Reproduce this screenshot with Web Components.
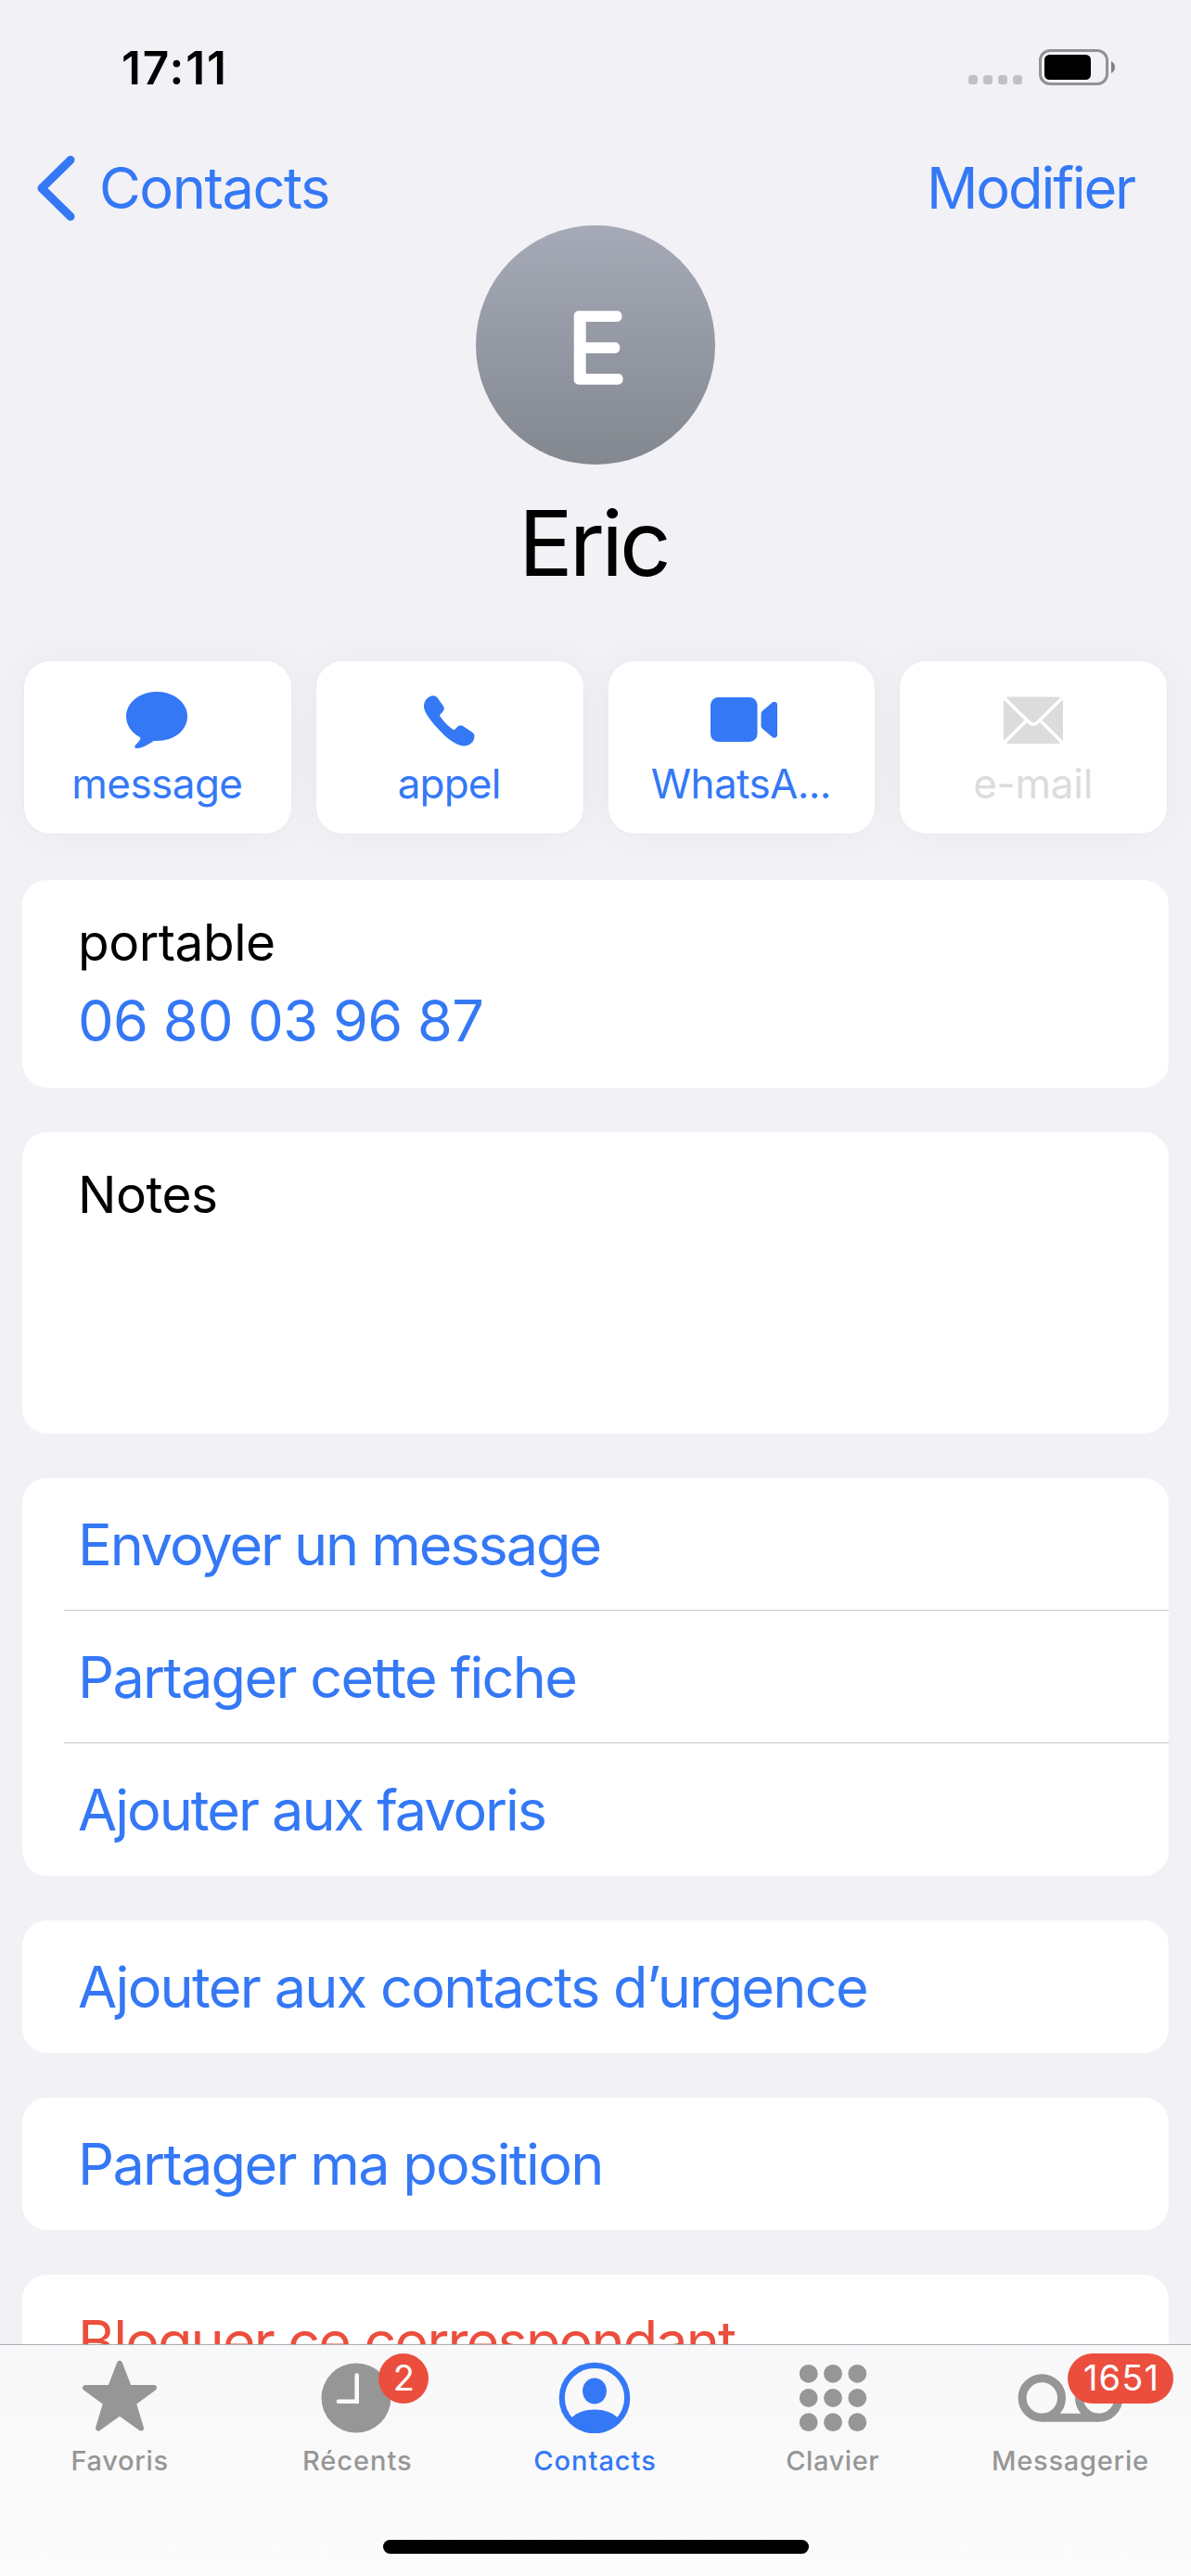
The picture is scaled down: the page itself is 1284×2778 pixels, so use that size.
<!DOCTYPE html>
<html lang="fr">
<head>
<meta charset="utf-8">
<title>Eric</title>
<style>
  html, body { margin: 0; padding: 0; }
  body {
    width: 1284px;
    height: 2778px;
    overflow: hidden;
    font-family: Inter, "Liberation Sans", sans-serif;
    --blue: #3478f6;
    --red: #eb4e3d;
    --grey: #969696;
    --page: #f2f1f6;
  }
</style>
</head>
<body>

<contact-screen>
  <status-bar slot="top" time="17:11"></status-bar>
  <nav-bar slot="top" back="Contacts" action="Modifier"></nav-bar>

  <contact-header initial="E">Eric</contact-header>

  <action-row>
    <action-tile label="message" style="letter-spacing:-.56px">
      <svg width="66" height="61" viewBox="0 0 66 61">
        <path d="M33 0C51.5 0 66 11.5 66 26.500C66 41.500 52 53 33 53C31.500 53 30.300 53 29.200 53.200C24 57 17 60.600 12 61C9.500 61.200 8.600 59.400 9.800 57.700C12 55.500 14.500 52.700 15.300 51C15.700 50 15.200 49.400 14.300 48.800C5.500 43.500 0 36 0 26.500C0 11.500 14.500 0 33 0Z"/>
      </svg>
    </action-tile>
    <action-tile label="appel" style="letter-spacing:-.81px">
      <svg width="55" height="61" viewBox="0 -4 55 61">
        <path d="M10 .2C12 0 13.500 1 14.800 2.800L21 11.500C22.300 13.800 21.800 15.800 20.200 17.800L17.800 20.200C17 21 17 21.800 17.600 22.800C21 28 26 33 31 36.600C32 37.300 32.800 37.200 33.600 36.400L36.500 33.500C38.300 31.800 40.500 31.800 42.500 33.200L51.500 39.300C53.800 41 54.500 42 54.500 44C54.500 50 49.500 54.400 43.500 54.400C37 54.400 29 49.500 21.500 42.500L12 32.500C4.500 23.500 0 17 0 11.500C0 5 5 .4 10 .2Z"/>
      </svg>
    </action-tile>
    <action-tile label="WhatsA..." style="letter-spacing:-.62px">
      <svg width="78" height="61" viewBox="-6 -6 78 61">
        <rect width="50.500" height="48" rx="8.500"/>
        <path d="M54.500 18C54.500 16.500 55 15.600 56.200 14.600L66.500 5.600C69 3.800 72 5 72 8V40.500C72 43.500 69 44.600 66.500 42.800L56.200 34C55 33 54.500 32.100 54.500 30.600Z"/>
      </svg>
    </action-tile>
    <action-tile label="e-mail" disabled style="letter-spacing:-.26px">
      <svg width="64" height="61" viewBox="0 -5.500 64 61">
        <rect width="64" height="50.500" rx="5"/>
        <g fill="none" stroke="#fff" stroke-width="3.600">
          <path d="M.5 1L27.500 27.500Q32 31.500 36.500 27.500L63.500 1"/>
          <path d="M.5 49.500L24 26M63.500 49.500L40 26"/>
        </g>
      </svg>
    </action-tile>
  </action-row>

  <card-group>
    <phone-field label="portable">06 80 03 96 87</phone-field>
  </card-group>

  <card-group>
    <notes-field>Notes</notes-field>
  </card-group>

  <card-group>
    <link-row style="letter-spacing:-2.1px">Envoyer un message</link-row>
    <link-row style="letter-spacing:-1.7px">Partager cette fiche</link-row>
    <link-row style="letter-spacing:-2.02px">Ajouter aux favoris</link-row>
  </card-group>

  <card-group>
    <link-row style="letter-spacing:-1.7px">Ajouter aux contacts d’urgence</link-row>
  </card-group>

  <card-group>
    <link-row style="letter-spacing:-1.7px">Partager ma position</link-row>
  </card-group>

  <card-group>
    <link-row danger style="letter-spacing:-1.86px">Bloquer ce correspondant</link-row>
  </card-group>

  <tab-bar slot="bottom">
    <tab-item label="Favoris" style="letter-spacing:.67px">
      <svg width="84" height="80" viewBox="0 0 84 80">
        <path stroke="currentColor" stroke-width="6" stroke-linejoin="round" d="M42 4.800L52.100 31H79L56.800 47.300L65 74.500L42 58L19 74.500L27.200 47.300L5 31H31.900Z"/>
      </svg>
    </tab-item>
    <tab-item label="Récents" badge="2" style="letter-spacing:.96px">
      <svg width="78" height="80" viewBox="0 0 78 80">
        <circle cx="38" cy="42" r="37.500"/>
        <path fill="none" stroke="#fafafa" stroke-width="4.600" stroke-linecap="round" d="M38.700 17.600V45.800H19"/>
        <path fill="#fafafa" d="M37 44H41V48.100H37Z"/>
      </svg>
    </tab-item>
    <tab-item label="Contacts" active style="letter-spacing:.99px">
      <svg width="78" height="80" viewBox="0 0 78 80">
        <circle cx="39" cy="42" r="35.200" fill="none" stroke="currentColor" stroke-width="6.200"/>
        <ellipse cx="39" cy="34.500" rx="12.900" ry="14"/>
        <path d="M14 63.500C20 57.500 29 54.500 39 54.500C49 54.500 58 57.500 64 63.500C59 73 49 79 39 79C29 79 19 73 14 63.500Z"/>
      </svg>
    </tab-item>
    <tab-item label="Clavier" style="letter-spacing:.57px">
      <svg width="76" height="80" viewBox="0 0 76 80">
        <circle cx="11.700" cy="15.800" r="9.900"/><circle cx="38" cy="15.800" r="9.900"/><circle cx="64.300" cy="15.800" r="9.900"/>
        <circle cx="11.700" cy="42" r="9.900"/><circle cx="38" cy="42" r="9.900"/><circle cx="64.300" cy="42" r="9.900"/>
        <circle cx="11.700" cy="68.200" r="9.900"/><circle cx="38" cy="68.200" r="9.900"/><circle cx="64.300" cy="68.200" r="9.900"/>
      </svg>
    </tab-item>
    <tab-item label="Messagerie" badge="1651" style="letter-spacing:.77px">
      <svg width="114" height="80" viewBox="0 0 114 80">
        <g fill="none" stroke="currentColor" stroke-width="9">
          <circle cx="26.300" cy="42" r="21.200"/>
          <circle cx="87.700" cy="42" r="21.200"/>
          <path d="M26.300 63.200H87.700"/>
        </g>
      </svg>
    </tab-item>
  </tab-bar>
</contact-screen>

<script>
// small helper, every element here has an open shadow root
function render(el, html) {
  const template = document.createElement("template")
  template.innerHTML = html
  el.attachShadow({ mode: "open" }).appendChild(template.content.cloneNode(true))
}

class ContactScreen extends HTMLElement {
  constructor() {
    super()
    render(this, `
      <style>
        :host { display: flex; flex-direction: column; height: 2778px; background: var(--page); }
        main { flex: 1; min-height: 0; overflow: hidden; display: flex; flex-direction: column; gap: 48px; }
        ::slotted(card-group) { margin: 0 24px; flex: none; }
      </style>
      <slot name="top"></slot>
      <main><slot></slot></main>
      <slot name="bottom"></slot>
    `)
  }
}

class StatusBar extends HTMLElement {
  constructor() {
    super()
    render(this, `
      <style>
        :host { display: flex; justify-content: space-between; align-items: center; height: 146px; padding: 0 82px 0 131px; box-sizing: border-box; flex: none; }
        span { font-size: 49.5px; font-weight: 600; letter-spacing: 1.9px; line-height: 60px; }
        svg { display: block; }
      </style>
      <span>${this.getAttribute("time")}</span>
      <svg width="160" height="60" viewBox="0 0 160 60">
        <g fill="#c1c0c5">
          <rect x="2" y="38" width="10" height="10" rx="3.500"/>
          <rect x="18" y="38" width="10" height="10" rx="3.500"/>
          <rect x="34" y="38" width="10" height="10" rx="3.500"/>
          <rect x="50" y="38" width="10" height="10" rx="3.500"/>
        </g>
        <rect x="79.500" y="11.500" width="72" height="36" rx="10.500" fill="none" stroke="#929296" stroke-width="3"/>
        <rect x="84" y="16" width="50" height="27" rx="5.500"/>
        <path fill="#828286" d="M156 23C161.300 25.500 161.300 33.500 156 36Z"/>
      </svg>
    `)
  }
}

class NavBar extends HTMLElement {
  constructor() {
    super()
    render(this, `
      <style>
        :host { display: flex; justify-content: space-between; align-items: center; height: 97px; padding: 17px 61px 0 38px; box-sizing: border-box; flex: none; color: var(--blue); font-size: 61.4px; line-height: 80px; }
        .back { display: flex; align-items: center; gap: 24px; }
        .back span { letter-spacing: -1.48px; }
        .edit { letter-spacing: -2.16px; }
        svg { display: block; }
      </style>
      <div class="back">
        <svg width="45" height="72" viewBox="0 0 45 72">
          <path fill="none" stroke="currentColor" stroke-width="9" stroke-linecap="round" stroke-linejoin="round" d="M38 5.500L7 36L38 66.500"/>
        </svg>
        <span>${this.getAttribute("back")}</span>
      </div>
      <div class="edit">${this.getAttribute("action")}</div>
    `)
  }
}

class ContactHeader extends HTMLElement {
  constructor() {
    super()
    render(this, `
      <style>
        :host { display: flex; flex-direction: column; align-items: center; height: 422px; flex: none; }
        .name { font-size: 97.7px; line-height: 120px; letter-spacing: -3.9px; margin-top: 25px; padding-right: 5px; }
        svg { display: block; }
      </style>
      <svg width="258" height="258" viewBox="0 0 258 258">
        <defs>
          <linearGradient id="disc" x1="0" y1="0" x2="0" y2="1">
            <stop offset="0" stop-color="#a6aab7"/>
            <stop offset="1" stop-color="#83878f"/>
          </linearGradient>
        </defs>
        <circle cx="129" cy="129" r="129" fill="url(#disc)"/>
        <text x="99" y="167" textLength="62" lengthAdjust="spacingAndGlyphs" font-family="Inter, sans-serif" font-size="96.500" font-weight="100" fill="#fff" stroke="#fff" stroke-width="9.500" stroke-linejoin="round">${this.getAttribute("initial")}</text>
      </svg>
      <div class="name"><slot></slot></div>
    `)
  }
}

class ActionRow extends HTMLElement {
  constructor() {
    super()
    render(this, `
      <style>
        :host { display: grid; grid-template-columns: repeat(4, 1fr); gap: 27px; padding: 0 26px; height: 186px; margin: 0 0 2px; flex: none; }
      </style>
      <slot></slot>
    `)
  }
}

class ActionTile extends HTMLElement {
  constructor() {
    super()
    render(this, `
      <style>
        :host { display: flex; flex-direction: column; align-items: center; box-sizing: border-box; padding: 33px 1px 0 0; background: #fff; border-radius: 28px; box-shadow: 0 0 2px rgba(0, 0, 0, .05), 0 0 44px rgba(0, 0, 0, .04); color: var(--blue); }
        :host([disabled]) { color: #dcdcdc; }
        ::slotted(svg) { display: block; fill: currentColor; }
        span { font-size: 44px; line-height: 54px; margin-top: 11px; }
      </style>
      <slot></slot>
      <span>${this.getAttribute("label")}</span>
    `)
  }
}

class CardGroup extends HTMLElement {
  constructor() {
    super()
    render(this, `
      <style>
        :host { display: block; background: #fff; border-radius: 27px; overflow: hidden; position: relative; }
        ::slotted(link-row:not(:last-child)) { --line: #c6c6c8; }
      </style>
      <slot></slot>
    `)
  }
}

class PhoneField extends HTMLElement {
  constructor() {
    super()
    render(this, `
      <style>
        :host { display: flex; flex-direction: column; height: 224px; box-sizing: border-box; padding: 33px 60px 0; }
        .label { font-size: 55px; line-height: 68px; letter-spacing: -.48px; }
        .number { font-size: 61.2px; line-height: 80px; letter-spacing: -.68px; color: var(--blue); margin-top: 11px; }
      </style>
      <div class="label">${this.getAttribute("label")}</div>
      <div class="number"><slot></slot></div>
    `)
  }
}

class NotesField extends HTMLElement {
  constructor() {
    super()
    render(this, `
      <style>
        :host { display: block; height: 325px; box-sizing: border-box; padding: 33px 60px; font-size: 55px; line-height: 68px; letter-spacing: -.48px; }
      </style>
      <slot></slot>
    `)
  }
}

class LinkRow extends HTMLElement {
  constructor() {
    super()
    render(this, `
      <style>
        :host { display: block; padding-left: 45px; color: var(--blue); font-size: 61.2px; }
        :host([danger]) { color: var(--red); }
        div { height: 143px; box-sizing: border-box; padding-left: 15px; line-height: 145px; white-space: nowrap; border-bottom: 1px solid var(--line, transparent); }
      </style>
      <div><slot></slot></div>
    `)
  }
}

class TabBar extends HTMLElement {
  constructor() {
    super()
    render(this, `
      <style>
        :host { display: flex; flex-direction: column; align-items: center; height: 250px; flex: none; box-sizing: border-box; border-top: 1px solid #adacaf; background: linear-gradient(#f8f7f9, #fafafa 50%, #fbfbfc); }
        nav { display: grid; grid-template-columns: repeat(5, 1fr); width: 100%; height: 210px; box-sizing: border-box; padding: 0 2px 0 1px; }
        .home { width: 459px; height: 15px; border-radius: 8px; background: #000; }
      </style>
      <nav><slot></slot></nav>
      <div class="home"></div>
    `)
  }
}

class TabItem extends HTMLElement {
  constructor() {
    super()
    const badge = this.getAttribute("badge")
    render(this, `
      <style>
        :host { display: flex; flex-direction: column; align-items: center; padding-top: 15px; color: var(--grey); }
        :host([active]) { color: var(--blue); }
        .icon { position: relative; display: flex; }
        ::slotted(svg) { display: block; fill: currentColor; }
        .label { font-size: 29px; line-height: 36px; font-weight: 500; margin-top: 12px; }
        /* the badge starts over the top right of the icon */
        .badge { position: absolute; top: -6px; left: calc(50% + 23px); min-width: 54px; height: 54px; box-sizing: border-box; padding: 0 15px 0 17px; border-radius: 27px; background: var(--red); color: #fff; font-size: 38px; line-height: 53px; text-align: center; letter-spacing: 1.2px; }
        .badge.short { padding: 0; letter-spacing: 0; }
        .badge.wide { left: calc(50% - 3px); }
      </style>
      <div class="icon">
        <slot></slot>
        ${badge ? `<span class="badge ${badge.length > 1 ? "wide" : "short"}">${badge}</span>` : ""}
      </div>
      <span class="label">${this.getAttribute("label")}</span>
    `)
  }
}

customElements.define("contact-screen", ContactScreen)
customElements.define("status-bar", StatusBar)
customElements.define("nav-bar", NavBar)
customElements.define("contact-header", ContactHeader)
customElements.define("action-row", ActionRow)
customElements.define("action-tile", ActionTile)
customElements.define("card-group", CardGroup)
customElements.define("phone-field", PhoneField)
customElements.define("notes-field", NotesField)
customElements.define("link-row", LinkRow)
customElements.define("tab-bar", TabBar)
customElements.define("tab-item", TabItem)
</script>
</body>
</html>
